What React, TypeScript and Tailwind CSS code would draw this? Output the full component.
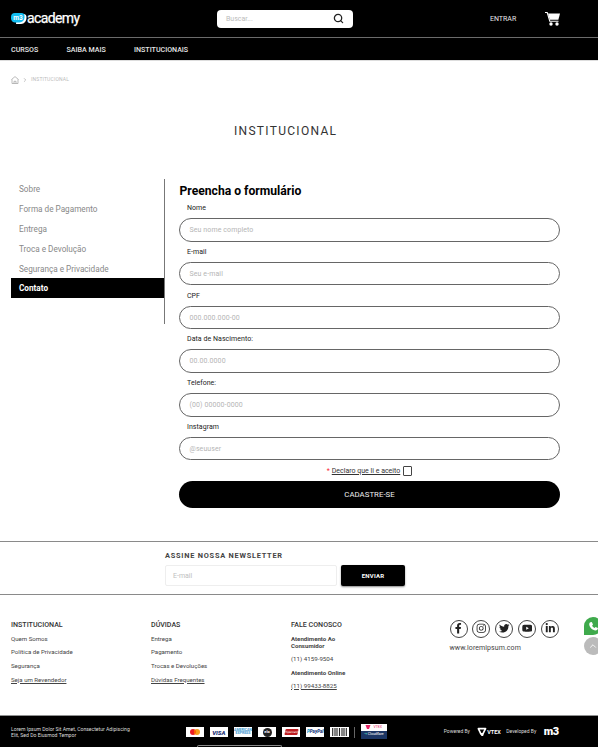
import React from "react";
import { FaFacebookF, FaInstagram, FaTwitter, FaYoutube, FaLinkedinIn, FaPhoneAlt } from "react-icons/fa";
import { ChevronRight, ChevronUp, Search } from "lucide-react";

const fields = [
  { label: "Nome", hint: "Seu nome completo" },
  { label: "E-mail", hint: "Seu e-mail" },
  { label: "CPF", hint: "000.000.000-00" },
  { label: "Data de Nascimento:", hint: "00.00.0000" },
  { label: "Telefone:", hint: "(00) 00000-0000" },
  { label: "Instagram", hint: "@seuuser" },
];

const menu = ["Sobre", "Forma de Pagamento", "Entrega", "Troca e Devolução", "Segurança e Privacidade"];

function Header() {
  return (
    <header className="h-[61px] border-b border-[#ddd] bg-black text-white">
      <div className="flex h-[38px] items-center border-b border-[#6b6b6b] pl-[11px]">
        <div className="flex w-[206px] items-center">
          <svg width="16" height="13" viewBox="0 0 16 13">
            <path d="M6 2h6.500a3.300 3.300 0 0 1 3 3.500c0 3.500-2 6.500-5.500 6.500H5z" fill="#fff" />
            <path d="M4 1h6.500a3 3 0 0 1 3 3v1.500a5 5 0 0 1-5 5H4.500A4 4 0 0 1 0 6.500V5a4 4 0 0 1 4-4z" fill="#10bdf2" />
            <text x="2.300" y="7.800" fontFamily="Roboto, sans-serif" fontSize="6.500" fontWeight="700" fill="#fff">m3</text>
          </svg>
          <span className="-mt-[2px] text-[14px] leading-[18px] tracking-[-0.62px] [-webkit-text-stroke:0.25px_white]">academy</span>
        </div>
        <div className="flex h-[18px] w-[136px] items-center justify-between rounded-[4px] bg-white pr-[9px] pl-[9px]">
          <span className="pt-[2px] text-[7px] text-[#bbb]">Buscar...</span>
          <Search size={11} color="#222" strokeWidth={2.8} />
        </div>
        <span className="ml-[137px] w-[55px] pt-[2px] text-[7px] text-[#e8e8e8]">ENTRAR</span>
        <svg width="16" height="16" viewBox="0 0 16 16">
          <path d="M0 1.500h2.200l2.600 8.700h8.700" fill="none" stroke="#fff" strokeWidth="1.100" />
          <path d="M3 2.500h12l-1.600 6.300H4.800z" fill="#fff" />
          <circle cx="6" cy="13" r="1.700" fill="#fff" />
          <circle cx="12" cy="13" r="1.700" fill="#fff" />
        </svg>
      </div>
      <nav className="flex h-[22px] items-center pt-[2px] pl-[11px] text-[7.100px] font-medium text-[#e6e6e6]">
        <span className="w-[55.500px]">CURSOS</span>
        <span className="w-[67.500px]">SAIBA MAIS</span>
        <span>INSTITUCIONAIS</span>
      </nav>
    </header>
  );
}

function FormSection() {
  return (
    <form className="w-[381px]">
      <h2 className="h-[22px] pt-px pl-[0.500px] text-[12.150px] leading-[22px] font-bold text-black">Preencha o formulário</h2>
      {fields.map((f) => (
        <div key={f.label} className="h-[43.750px]">
          <div className="h-[17px] pt-[1px] pl-[8px] text-[7px] leading-[13px] tracking-[0.05px] text-[#222]">{f.label}</div>
          <div className="flex h-[23.500px] items-center rounded-full border border-[#666] pt-px pl-[9.500px] text-[7px] tracking-[0.1px] text-[#b5b5b5]">
            {f.hint}
          </div>
        </div>
      ))}
      <div className="-mt-[1px] flex h-[17px] items-center justify-center text-[7px] text-[#333]">
        <span className="mr-[2px] text-red-500">*</span>
        <span className="underline">Declaro que li e aceito</span>
        <span className="ml-[2.500px] h-[9.500px] w-[9.500px] rounded-[1px] border border-[#444]" />
      </div>
      <div className="mt-[1px] flex h-[27px] items-center justify-center rounded-full bg-black pt-px text-[7.800px] tracking-[0.04px] text-[#eee]">
        CADASTRE-SE
      </div>
    </form>
  );
}

function Newsletter() {
  return (
    <section className="h-[54px] border-y border-[#8a8a8a] pl-[165px]">
      <h3 className="pt-[9px] text-[7.400px] leading-[9px] font-bold tracking-[0.76px] text-[#444]">ASSINE NOSSA NEWSLETTER</h3>
      <div className="mt-[5px] flex gap-[4px]">
        <div className="flex h-[21px] w-[172px] items-center rounded-[2px] border border-[#eee] pt-px pl-[7px] text-[7px] text-[#c0c0c0]">E-mail</div>
        <div className="flex h-[21px] w-[64px] items-center justify-center rounded-[2px] bg-black text-[6px] font-bold tracking-[0.2px] text-white shadow-[0_1px_2px_#888]">ENVIAR</div>
      </div>
    </section>
  );
}

function Links({ title, items }: { title: string; items: string[] }) {
  return (
    <div className="w-[140px] shrink-0">
      <h4 className="h-[16px] text-[7.100px] leading-[12px] font-medium text-[#333]">{title}</h4>
      {items.map((item) => (
        <div key={item} className="h-[13.700px] text-[6.100px] leading-[8px] text-[#444] last:underline">{item}</div>
      ))}
    </div>
  );
}

function FooterLinks() {
  const socials = [FaFacebookF, FaInstagram, FaTwitter, FaYoutube, FaLinkedinIn];
  return (
    <section className="flex h-[120px] overflow-hidden pt-[23.500px] pl-[11px]">
      <Links title="INSTITUCIONAL" items={["Quem Somos", "Política de Privacidade", "Segurança", "Seja um Revendedor"]} />
      <Links title="DÚVIDAS" items={["Entrega", "Pagamento", "Trocas e Devoluções", "Dúvidas Frequentes"]} />
      <div className="w-[158.500px] shrink-0 text-[6.100px] leading-[7px] text-[#444]">
        <h4 className="h-[16px] text-[7.100px] leading-[12px] font-medium text-[#333]">FALE CONOSCO</h4>
        <div className="h-[20.500px] font-bold">Atendimento Ao<br />Consumidor</div>
        <div className="h-[13.700px] pt-[0.500px] text-[6.200px]">(11) 4159-9504</div>
        <div className="h-[13.700px] pt-[0.500px] font-bold">Atendimento Online</div>
        <div className="pt-[0.500px] text-[6.200px] underline">(11) 99433-8825</div>
      </div>
      <div className="w-[134.500px] shrink-0 pt-[1px]">
        <div className="flex gap-[4.900px]">
          {socials.map((Icon, i) => (
            <span key={i} className="flex h-[18px] w-[18px] items-center justify-center rounded-full border border-[#444] text-[#222]">
              <Icon size={10.5} />
            </span>
          ))}
        </div>
        <div className="mt-[6px] text-[7px] leading-[9px] tracking-[0.08px] text-[#444]">www.loremipsum.com</div>
      </div>
      <div className="-mt-[1.500px] shrink-0">
        <div className="flex h-[18px] w-[18px] items-center justify-center rounded-full rounded-bl-[3px] bg-[#3faa4c] text-white">
          <svg width="11" height="11" viewBox="0 0 11 11">
            <path d="M2.500 1.200 3.800 1 5 3.500l-.9 1.200c.6 1.100 1.300 1.700 2.400 2.200l1.100-1 2.300 1.200c.1 1.600-1 2.400-2.300 2.400C4.300 9.200 1.500 6.500 1.200 3.300c0-.9.500-1.700 1.300-2.100z" fill="#fff" />
          </svg>
        </div>
        <div className="mt-[2px] flex h-[18px] w-[18px] items-center justify-center rounded-full bg-[#bbb] text-white"><ChevronUp size={10} /></div>
      </div>
    </section>
  );
}

function Payments() {
  const box = "flex h-[10px] w-[18.500px] items-center justify-center overflow-hidden bg-white";
  return (
    <div className="flex items-center gap-[5.600px] pt-px">
      <div className={box}>
        <svg width="12" height="8" viewBox="0 0 12 8">
          <circle cx="4" cy="4" r="3" fill="#e91d25" /><circle cx="8" cy="4" r="3" fill="#f79e1b" /><path d="M6 1.800a3 3 0 0 1 0 4.400a3 3 0 0 1 0-4.400" fill="#ff5f00" />
        </svg>
      </div>
      <div className={`${box} text-[6px] font-black text-[#1d3276] italic`}>VISA</div>
      <div className={`${box} flex-col text-[3.500px] leading-[3.500px] font-bold text-[#3a98d2]`}><span>AMERICAN</span><span>EXPRESS</span></div>
      <div className={box}>
        <span className="flex h-[9px] w-[9px] items-center justify-center rounded-full bg-[#222] text-[4px] font-bold text-white">elo</span>
      </div>
      <div className={box}><span className="flex h-[6px] w-[13px] -skew-x-12 items-center justify-center rounded-[1px] bg-[#bd1c20] text-[3px] text-white">Hipercard</span></div>
      <div className={`${box} text-[4.500px] leading-[10px] font-black text-[#173b80] italic`}><span className="text-[#169bd7]">P</span>PayPal</div>
      <div className={box}>
        <svg width="15" height="8" viewBox="0 0 15 8"><path d="M.7 0v8M3 0v8M5 0v8M7.500 0v8M10 0v8M12 0v8M14.300 0v8" stroke="#222" strokeWidth="1.100" /></svg>
      </div>
      <span className="h-[11px] w-px bg-[#666]" />
      <div className="h-[15px] w-[26px] -translate-y-px text-[3.500px] leading-[7px]">
        <div className="flex h-[7.500px] items-center justify-center gap-[2px] bg-white text-[#e62565]">
          <svg width="6" height="6" viewBox="0 0 6 6"><path d="M.5 1h5L4 5H2z" fill="#e62565" /></svg>VTEX
        </div>
        <div className="flex h-[7.500px] items-center justify-center gap-[1px] bg-[#1c3665] text-white"><span className="text-[#40b9aa]">➔</span>Cloudflare</div>
      </div>
    </div>
  );
}

function BottomBar() {
  return (
    <footer className="relative flex h-[32px] items-center border-t border-[#8f9191] bg-black pl-[11px] text-white">
      <p className="w-[174.500px] text-[5.100px] leading-[6px] text-[#ddd]">Lorem Ipsum Dolor Sit Amet, Consectetur Adipiscing<br />Elit, Sed Do Eiusmod Tempor</p>
      <Payments />
      <span className="ml-[57px] w-[33.500px] pt-px text-[5px] text-[#ddd]">Powered By</span>
      <svg width="10" height="10" viewBox="0 0 9 9"><path d="M1.200 1.500h6.500L5.300 6.200H3.500z" fill="none" stroke="#fff" strokeWidth="1.500" strokeLinejoin="round" /><path d="M2.500 5.500 4 8h1.500l.5-1.500z" fill="#fff" /></svg>
      <span className="w-[19px] pt-px text-[5.500px] font-bold">VTEX</span>
      <span className="w-[37.500px] pt-px text-[5px] text-[#ddd]">Developed By</span>
      <span className="text-[11px] leading-[11px] font-black tracking-[-0.5px]">m3</span>
      <span className="absolute bottom-0 left-[197px] h-[2px] w-[85px] rounded-t-[3px] border border-b-0 border-[#888]" />
    </footer>
  );
}

export default function App() {
  return (
    <div className="h-[747px] w-[598px] overflow-hidden bg-white font-['Roboto',sans-serif] whitespace-nowrap">
      <Header />
      <div className="flex h-[36px] items-center pt-px pl-[11px] text-[5px] text-[#bbb]">
        <svg width="8" height="8" viewBox="0 0 8 8"><path d="M.5 3.500 4 .6l3.500 2.900M1 3.300v4.200h6V3.300M3 7.500V5.300h2v2.200" fill="none" stroke="#aaa" strokeWidth=".8" /></svg>
        <ChevronRight size={6} color="#888" className="mx-[3px]" />
        <span className="pt-px tracking-[0.16px]">INSTITUCIONAL</span>
      </div>
      <h1 className="h-[82px] pt-[26px] pl-[234px] text-[12px] leading-[17px] tracking-[1.300px] text-[#333]">INSTITUCIONAL</h1>
      <main className="flex h-[362px] pl-[11px]">
        <aside className="mr-[14px] h-[145px] w-[154px] border-r border-[#777]">
          {menu.map((m) => (
            <div key={m} className="flex h-[19.850px] items-center pt-px pl-[8px] text-[8.200px] text-[#888]">{m}</div>
          ))}
          <div className="flex h-[19.850px] items-center bg-black pt-px pl-[8px] text-[8.200px] font-bold text-white">Contato</div>
        </aside>
        <FormSection />
      </main>
      <Newsletter />
      <FooterLinks />
      <BottomBar />
    </div>
  );
}
